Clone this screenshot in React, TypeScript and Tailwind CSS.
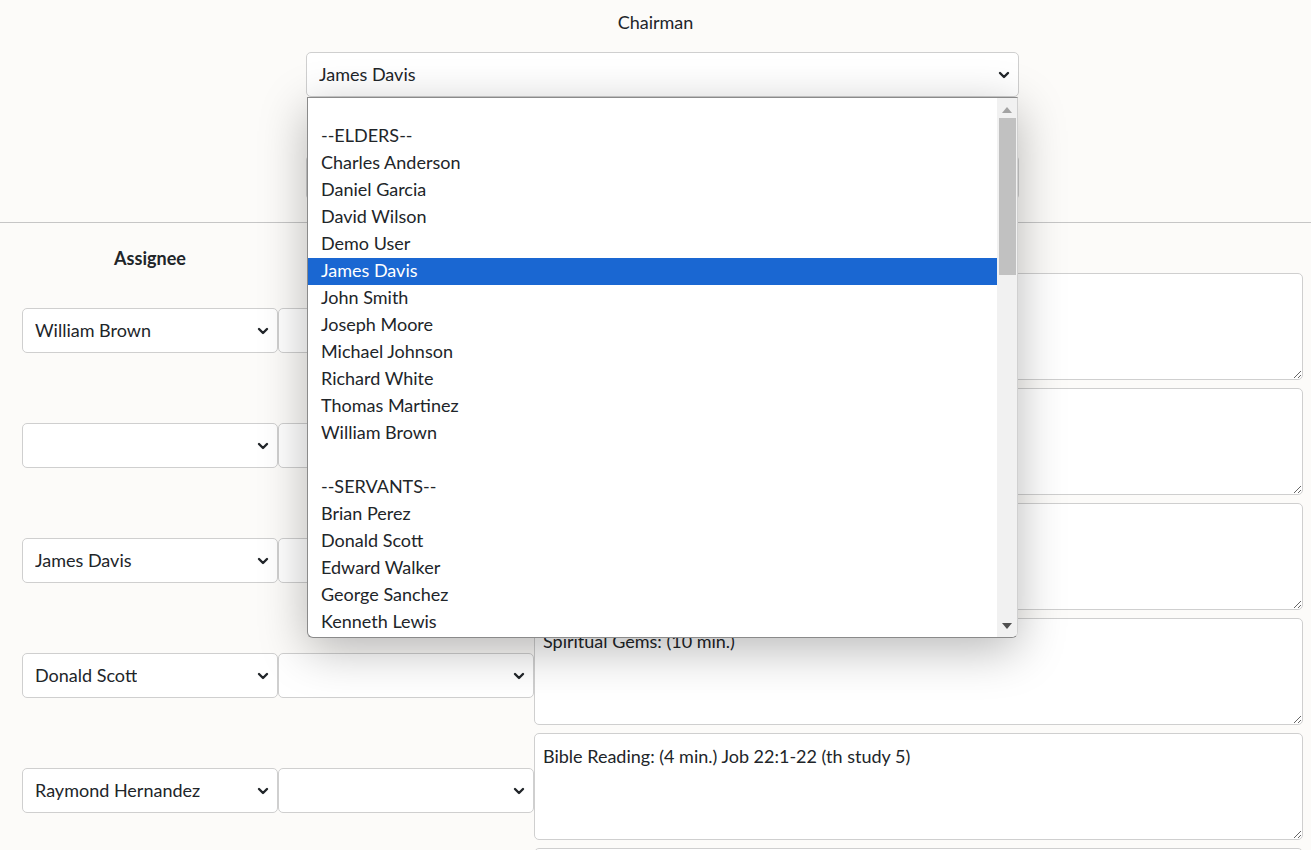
import type { FC } from "react";

const Chevron: FC<{ className?: string }> = ({ className }) => (
	<svg viewBox="0 0 16 16" className={className} fill="none">
		<path
			d="M4 6l4 4 4-4"
			stroke="#212529"
			strokeWidth="2.4"
			strokeLinecap="round"
			strokeLinejoin="round"
		/>
	</svg>
);

const FakeSelect: FC<{ value?: string; className?: string }> = ({
	value,
	className = "",
}) => (
	<div
		className={`flex h-[45px] shrink-0 items-center justify-between rounded-[5px] border border-[#cfcfcf] bg-white pl-[12px] pr-[6px] text-[18px] text-[#212529] ${className}`}
	>
		<span className="truncate">{value}</span>
		<Chevron className="size-[16px] shrink-0" />
	</div>
);

const options = [
	"",
	"--ELDERS--",
	"Charles Anderson",
	"Daniel Garcia",
	"David Wilson",
	"Demo User",
	"James Davis",
	"John Smith",
	"Joseph Moore",
	"Michael Johnson",
	"Richard White",
	"Thomas Martinez",
	"William Brown",
	"",
	"--SERVANTS--",
	"Brian Perez",
	"Donald Scott",
	"Edward Walker",
	"George Sanchez",
	"Kenneth Lewis",
];

const rows = [
	{ a: "William Brown", text: "Treasures From God's Word: (10 min.)" },
	{ a: "", text: "Opening Comments (1 min.)" },
	{ a: "James Davis", text: "Song 12 and Prayer" },
	{ a: "Donald Scott", text: "Spiritual Gems: (10 min.)" },
	{ a: "Raymond Hernandez", text: "Bible Reading: (4 min.) Job 22:1-22 (th study 5)" },
	{ a: "", text: "Starting a Conversation (3 min.)" },
];

export default function App() {
	return (
		<div
			className="relative h-[850px] overflow-hidden bg-[#fcfbf9] text-[#212529]"
			style={{ fontFamily: "Lato, 'Open Sans', sans-serif" }}
		>
			{/* top: meeting roles */}
			<div className="flex flex-col items-center pt-[9px]">
				<div className="text-[18px] leading-[26px]">Chairman</div>
				<FakeSelect value="James Davis" className="ml-[14px] mt-[17px] w-[713px]" />
				<FakeSelect value="" className="ml-[14px] mt-[58px] w-[713px]" />
			</div>
			<div className="mt-[22px] border-t border-[#c6c6c6]" />

			{/* assignments table */}
			<div className="pl-[22px] pr-[8px]">
				<div className="flex h-[50px] items-end pb-[4px]">
					<div className="w-[256px] text-center text-[18px] font-bold leading-[22px]">
						Assignee
					</div>
				</div>
				{rows.map((r, i) => (
					<div key={i} className="flex h-[115px] items-start">
						<FakeSelect value={r.a} className="mt-[35px] w-[256px]" />
						<FakeSelect value="" className="mt-[35px] w-[256px]" />
						<textarea
							readOnly
							defaultValue={r.text}
							className="h-[107px] w-[769px] shrink-0 rounded-[5px] border border-[#cfcfcf] bg-white px-[8px] pb-[6px] pt-[9px] text-[18px] leading-[26px] text-[#212529] outline-none"
						/>
					</div>
				))}
			</div>

			{/* open native select popup */}
			<div className="absolute left-[307px] top-[97px] flex h-[541px] w-[711px] overflow-hidden rounded-b-[6px] border border-[#8a8a8a] border-r-[#d0d0d0] bg-white shadow-[0_12px_48px_rgba(0,0,0,0.28)]">
				<div className="-mt-[2px] flex-1">
					{options.map((o, i) => (
						<div
							key={i}
							className={`h-[27px] pl-[13px] text-[18px] leading-[25px] ${
								o === "James Davis" ? "bg-[#1a67d2] text-white" : "text-[#212529]"
							}`}
						>
							{o}
						</div>
					))}
				</div>
				<div className="relative flex w-[20px] flex-col items-center bg-[#f1f1f1]">
					<svg viewBox="0 0 10 6" className="mt-[9px] h-[6px] w-[10px]">
						<path d="M0 6L5 0l5 6z" fill="#a3a3a3" />
					</svg>
					<div className="mt-[5px] h-[157px] w-[17px] bg-[#c1c1c1]" />
					<svg viewBox="0 0 10 6" className="absolute bottom-[8px] h-[6px] w-[10px]">
						<path d="M0 0l5 6 5-6z" fill="#505050" />
					</svg>
				</div>
			</div>
		</div>
	);
}
